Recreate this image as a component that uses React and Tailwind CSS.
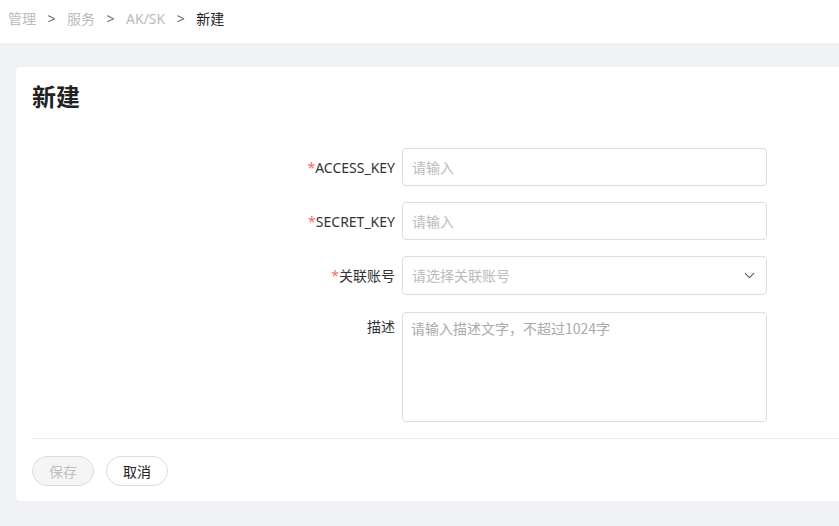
import { ChevronDown } from "lucide-react";

const font = { fontFamily: '"Noto Sans", "Noto Sans CJK SC", sans-serif' };

function Row({ label, required, children, top }) {
  return (
    <div className={`flex ${top ? "items-start" : "items-center"}`}>
      <div
        className={`w-[370px] shrink-0 pr-[7px] text-right text-[14px] text-[#333] ${
          top ? "pt-[5px]" : ""
        }`}
      >
        {required && <span className="text-[#f56c6c]">*</span>}
        {label}
      </div>
      {children}
    </div>
  );
}

export default function App() {
  return (
    <div className="w-[839px] h-[526px] overflow-hidden bg-[#f0f1f4]" style={font}>
      <div className="h-[43px] bg-white flex items-center pl-[8px] text-[14px] gap-[11.5px] pb-[6px]">
        <span className="text-[#bbb]">管理</span>
        <span className="text-[#666]">&gt;</span>
        <span className="text-[#bbb]">服务</span>
        <span className="text-[#666]">&gt;</span>
        <span className="text-[#bbb]">AK/SK</span>
        <span className="text-[#666]">&gt;</span>
        <span className="text-[#222]">新建</span>
      </div>

      <div className="ml-[16px] mt-[24px] w-[840px] h-[434px] bg-white rounded-[4px] pl-[16px] pt-[14px]">
        <h1 className="text-[24px] font-bold text-[#222] leading-[32px]">新建</h1>

        <div className="mt-[35px] flex flex-col gap-[16px]">
          <Row label="ACCESS_KEY" required>
            <div className="w-[365px] h-[38px] border border-[#dcdcdc] rounded-[4px] flex items-center px-[9px] text-[14px] text-[#bbb]">
              请输入
            </div>
          </Row>
          <Row label="SECRET_KEY" required>
            <div className="w-[365px] h-[38px] border border-[#dcdcdc] rounded-[4px] flex items-center px-[9px] text-[14px] text-[#bbb]">
              请输入
            </div>
          </Row>
          <Row label="关联账号" required>
            <div className="w-[365px] h-[39px] border border-[#dcdcdc] rounded-[4px] flex items-center justify-between pl-[9px] pr-[8px] text-[14px] text-[#bbb]">
              <span>请选择关联账号</span>
              <ChevronDown size={17} strokeWidth={1.5} className="text-[#555]" />
            </div>
          </Row>
          <Row label="描述" top>
            <div
              className="mt-[1px] w-[365px] h-[110px] border border-[#dcdcdc] rounded-[4px] px-[8px] pt-[5px] text-[14px] text-[#aaa]"
              style={{ fontFamily: '"Noto Sans CJK SC", "Liberation Serif", serif' }}
            >
              请输入描述文字，不超过1024字
            </div>
          </Row>
        </div>

        <div className="mt-[16px] h-px bg-[#ebebeb]" />

        <div className="mt-[17px] flex gap-[12px]">
          <button className="w-[62px] h-[30px] rounded-full border border-[#dcdcdc] bg-[#f5f5f5] text-[14px] text-[#c0c0c0]">
            保存
          </button>
          <button className="w-[62px] h-[30px] rounded-full border border-[#dcdcdc] bg-white text-[14px] text-[#222]">
            取消
          </button>
        </div>
      </div>
    </div>
  );
}
